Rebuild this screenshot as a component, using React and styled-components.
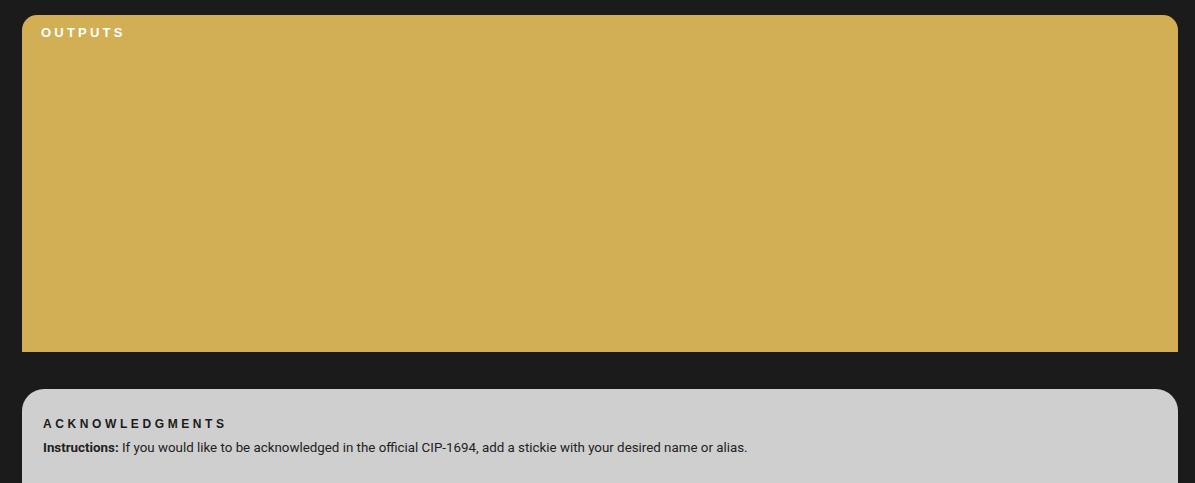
import React from 'react'
import styled, { createGlobalStyle } from 'styled-components'

const Global = createGlobalStyle`
  html, body {
    margin: 0;
    background: #1b1b1b;
    font-family: Roboto, "Liberation Sans", sans-serif;
  }
`

const Page = styled.div`
  padding: 15px 17px 0 22px;
  height: 483px;
  box-sizing: border-box;
  overflow: hidden;
  display: flex;
  flex-direction: column;
  gap: 37px;
`

const Panel = styled.section`
  background: ${(p) => p.$bg};
  color: ${(p) => p.$fg};
  border-radius: ${(p) => p.$radius}px ${(p) => p.$radius}px 0 0;
  padding: ${(p) => p.$pad};
  height: ${(p) => p.$height};
  box-sizing: border-box;
  flex-shrink: 0;
`

const Heading = styled.h2`
  margin: 0;
  font-family: "Liberation Sans", Arial, sans-serif;
  font-size: ${(p) => p.$size}px;
  font-weight: 700;
  letter-spacing: ${(p) => p.$spacing}px;
  line-height: 16px;
  text-transform: uppercase;
`

const Text = styled.p`
  margin: 7px 0 0;
  font-size: 13.33px;
  line-height: 18px;
  color: #222;
  b {
    font-weight: 700;
  }
`

export default function App() {
  return (
    <>
      <Global />
      <Page>
        <Panel $bg="#d2af55" $fg="#fff" $radius={15} $pad="10px 19px" $height="337px">
          <Heading $size={13} $spacing={3.2}>Outputs</Heading>
        </Panel>
        <Panel $bg="#cfcfcf" $fg="#1b1b1b" $radius={22} $pad="27px 21px" $height="120px">
          <Heading $size={12} $spacing={3.6}>Acknowledgments</Heading>
          <Text>
            <b>Instructions:</b> If you would like to be acknowledged in the official CIP-1694,
            add a stickie with your desired name or alias.
          </Text>
        </Panel>
      </Page>
    </>
  )
}
